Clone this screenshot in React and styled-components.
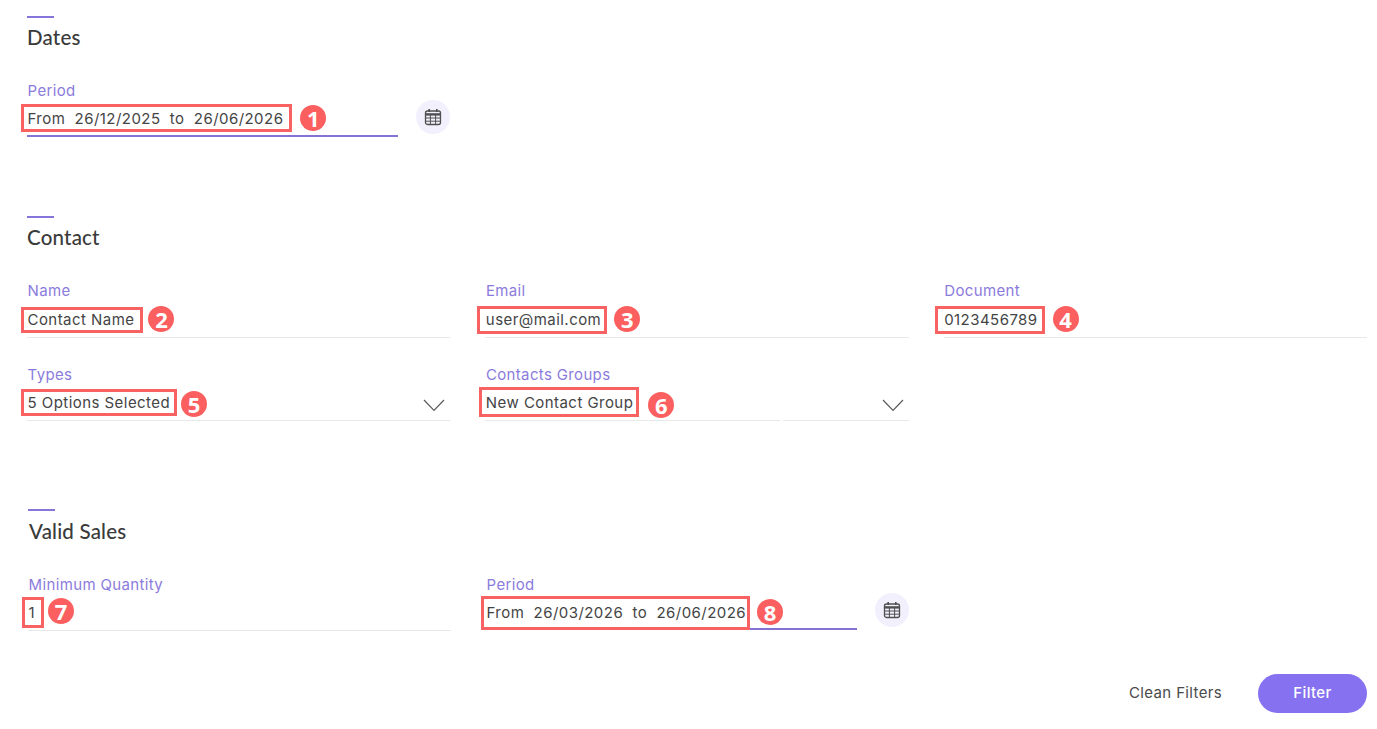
import React from "react";
import styled, { createGlobalStyle } from "styled-components";

const Global = createGlobalStyle`
  html, body { margin: 0; padding: 0; background: #fff; }
  body { font-family: Inter, "Liberation Sans", sans-serif; color: #3f3f3f; }
`;

const Page = styled.div`
  width: 1377px;
  height: 729px;
  box-sizing: border-box;
  padding: 16px 10px 0 27px;
  overflow: hidden;
`;

const Section = styled.section`
  height: ${(p) => p.$height}px;
  padding-left: ${(p) => p.$shift || 0}px;
`;

const Rule = styled.div`
  width: 27px;
  height: 2px;
  background: #8875dc;
`;

const Title = styled.h2`
  margin: ${(p) => p.$top ?? 7}px 0 0;
  height: 24px;
  font-family: Lato, "Open Sans", sans-serif;
  font-size: 20.5px;
  letter-spacing: 0.2px;
  line-height: 24px;
  font-weight: 500;
  color: #3a3a3a;
  padding-left: ${(p) => p.$indent || 0}px;
`;

const Grid = styled.div`
  display: grid;
  grid-template-columns: repeat(3, 1fr);
  column-gap: 35px;
  row-gap: 28px;
  margin-top: 33px;
`;

const Field = styled.div`
  min-width: 0;
`;

const Label = styled.div`
  height: 18px;
  padding-left: 0.6px;
  font-size: 15px;
  letter-spacing: 0.35px;
  line-height: 18px;
  color: #8b7bdc;
`;

const Line = styled.div`
  display: flex;
  align-items: center;
  height: ${(p) => (p.$compact ? 36 : 37)}px;
  border-bottom: 1px solid #e8e8e8;
`;

const ActiveLine = styled(Line)`
  flex: 1;
  min-width: 0;
  height: ${(p) => (p.$compact ? 33 : 35)}px;
  border-bottom: 2px solid #8672d2;
`;

const SplitLine = styled(Line)`
  position: relative;
  &::after {
    content: "";
    position: absolute;
    left: 295px;
    bottom: -1px;
    width: 3px;
    height: 1px;
    background: #fff;
  }
`;

const DateWrap = styled.div`
  display: flex;
  align-items: flex-end;
  gap: 18px;
  margin-top: ${(p) => (p.$compact ? -1 : 0)}px;
`;

const Marked = styled.span`
  display: inline-flex;
  align-items: center;
  flex: none;
  box-sizing: border-box;
  height: ${(p) => p.$h}px;
  margin-left: ${(p) => -6.5 - (p.$left ?? 4) + 4}px;
  margin-top: ${(p) => p.$top ?? 0}px;
  padding: 0 ${(p) => p.$right ?? 5}px ${(p) => p.$lift ?? 0}px ${(p) => p.$left ?? 4}px;
  border: 3px solid #f96262;
  background: #fff;
  font-size: 15px;
  letter-spacing: 0.45px;
  white-space: pre;
  color: #444;
  position: relative;
  z-index: 1;
`;

const Badge = styled.span`
  display: inline-flex;
  align-items: center;
  justify-content: center;
  flex: none;
  width: 26px;
  height: 26px;
  margin-left: ${(p) => p.$gap ?? 8}px;
  margin-top: ${(p) => p.$top ?? 0}px;
  border-radius: 50%;
  background: #fb5f5f;
  color: #fff;
  font-family: "Open Sans", sans-serif;
  font-size: 22px;
  font-weight: 700;
  line-height: 1;
  position: relative;
  z-index: 1;
`;

const Chevron = styled.svg`
  margin-left: auto;
  margin-right: 5px;
  margin-top: 6px;
  flex: none;
`;

const CalendarButton = styled.button`
  flex: none;
  display: flex;
  align-items: center;
  justify-content: center;
  width: 34px;
  height: 34px;
  margin-bottom: 3px;
  padding: 0;
  border: 0;
  border-radius: 50%;
  background: #f2f0fc;
`;

const Footer = styled.div`
  display: flex;
  justify-content: flex-end;
  align-items: center;
  gap: 36px;
`;

const CleanButton = styled.button`
  padding: 0 0 2px;
  border: 0;
  background: none;
  font: 400 15px Inter, sans-serif;
  letter-spacing: 0.35px;
  color: #4a4a4a;
`;

const FilterButton = styled.button`
  width: 109px;
  height: 39px;
  padding: 0 0 2px;
  border: 0;
  border-radius: 20px;
  background: #8672f0;
  color: #fff;
  font: 500 15px Inter, sans-serif;
  letter-spacing: 0.35px;
`;

const CalendarIcon = () => (
  <svg width="18" height="18" viewBox="0 0 18 18" fill="none" stroke="#4f4f4f">
    <rect x="1.5" y="3" width="15" height="13.5" rx="2" strokeWidth="1.3" />
    <path d="M1.5 6.4h15" strokeWidth="2.4" />
    <path d="M1.5 10h15M1.5 13.2h15M6.4 7v9.5M11.6 7v9.5" strokeWidth="1" />
    <path d="M5.2 1v3M12.8 1v3" strokeWidth="1.6" />
  </svg>
);

const ChevronIcon = () => (
  <Chevron width="22" height="13" viewBox="0 0 22 13" fill="none" stroke="#5a5a5a" strokeWidth="1.2">
    <path d="M1 1l10 10.5L21 1" />
  </Chevron>
);

const App = () => (
  <Page>
    <Global />
    <Section $height={200}>
      <Rule />
      <Title>Dates</Title>
      <Grid>
        <Field>
          <Label>Period</Label>
          <DateWrap>
            <ActiveLine>
              <Marked $h={28} $top={1} $right={6}>From  26/12/2025  to  26/06/2026</Marked>
              <Badge $top={1}>1</Badge>
            </ActiveLine>
            <CalendarButton aria-label="Calendar">
              <CalendarIcon />
            </CalendarButton>
          </DateWrap>
        </Field>
      </Grid>
    </Section>

    <Section $height={293}>
      <Rule />
      <Title>Contact</Title>
      <Grid>
        <Field>
          <Label>Name</Label>
          <Line>
            <Marked $h={26} $top={2} $right={6}>Contact Name</Marked>
            <Badge $gap={5} $top={1}>2</Badge>
          </Line>
        </Field>
        <Field>
          <Label>Email</Label>
          <Line>
            <Marked $h={28} $top={2} $left={6} $right={3}>user@mail.com</Marked>
            <Badge $gap={7}>3</Badge>
          </Line>
        </Field>
        <Field>
          <Label>Document</Label>
          <Line>
            <Marked $h={28} $top={2} $left={6} $right={4}>0123456789</Marked>
            <Badge $gap={8}>4</Badge>
          </Line>
        </Field>
        <Field>
          <Label>Types</Label>
          <Line $compact>
            <Marked $h={27} $top={1} $right={4}>5 Options Selected</Marked>
            <Badge $gap={4} $top={4}>5</Badge>
            <ChevronIcon />
          </Line>
        </Field>
        <Field>
          <Label>Contacts Groups</Label>
          <SplitLine $compact>
            <Marked $h={30} $right={3}>New Contact Group</Marked>
            <Badge $gap={9} $top={6}>6</Badge>
            <ChevronIcon />
          </SplitLine>
        </Field>
      </Grid>
    </Section>

    <Section $height={165} $shift={1}>
      <Rule />
      <Title $top={8} $indent={1}>Valid Sales</Title>
      <Grid>
        <Field>
          <Label>Minimum Quantity</Label>
          <Line $compact>
            <Marked $h={31} $top={1} $right={6}>1</Marked>
            <Badge $gap={4} $top={-2}>7</Badge>
          </Line>
        </Field>
        <Field>
          <Label>Period</Label>
          <DateWrap $compact>
            <ActiveLine $compact>
              <Marked $h={34} $top={3} $left={3} $right={1} $lift={2}>From  26/03/2026  to  26/06/2026</Marked>
              <Badge $gap={7}>8</Badge>
            </ActiveLine>
            <CalendarButton aria-label="Calendar">
              <CalendarIcon />
            </CalendarButton>
          </DateWrap>
        </Field>
      </Grid>
    </Section>

    <Footer>
      <CleanButton>Clean Filters</CleanButton>
      <FilterButton>Filter</FilterButton>
    </Footer>
  </Page>
);

export default App;
